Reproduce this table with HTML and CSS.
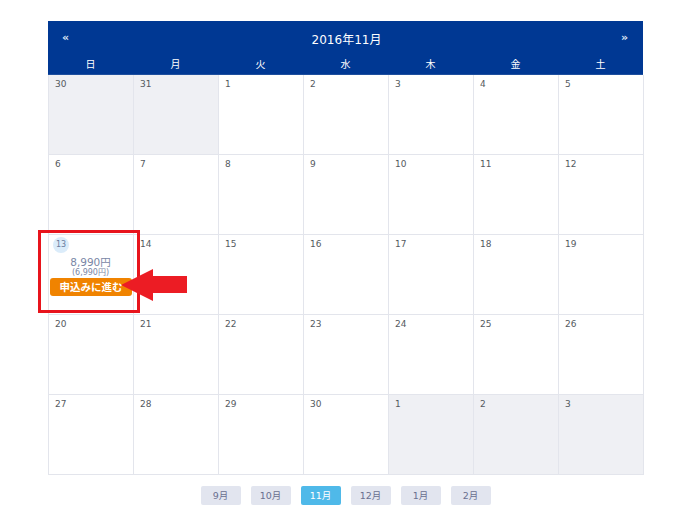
FILE: index.html
```html
<!DOCTYPE html>
<html lang="ja">
<head>
<meta charset="utf-8">
<link rel="stylesheet" href="styles.css">
</head>
<body>
<div class="page">
  <div class="cal">
    <div class="cal-head">
      <span class="nav">&laquo;</span>
      <span class="title">2016年11月</span>
      <span class="nav">&raquo;</span>
    </div>
    <div class="weekdays">
      <div>日</div><div>月</div><div>火</div><div>水</div><div>木</div><div>金</div><div>土</div>
    </div>
    <div class="grid">
      <div class="cell off"><span class="d">30</span></div>
      <div class="cell off"><span class="d">31</span></div>
      <div class="cell"><span class="d">1</span></div>
      <div class="cell"><span class="d">2</span></div>
      <div class="cell"><span class="d">3</span></div>
      <div class="cell"><span class="d">4</span></div>
      <div class="cell"><span class="d">5</span></div>

      <div class="cell"><span class="d">6</span></div>
      <div class="cell"><span class="d">7</span></div>
      <div class="cell"><span class="d">8</span></div>
      <div class="cell"><span class="d">9</span></div>
      <div class="cell"><span class="d">10</span></div>
      <div class="cell"><span class="d">11</span></div>
      <div class="cell"><span class="d">12</span></div>

      <div class="cell avail">
        <span class="d badge">13</span>
        <div class="price">8,990円</div>
        <div class="sub">(6,990円)</div>
        <button class="apply">申込みに進む</button>
        <div class="hl"></div>
        <svg class="arrow" width="66" height="34" viewBox="0 0 66 34"><polygon points="0,16 32,0 32,7 66,7 66,24 32,24 32,32" fill="#ec1c24"/></svg>
      </div>
      <div class="cell"><span class="d">14</span></div>
      <div class="cell"><span class="d">15</span></div>
      <div class="cell"><span class="d">16</span></div>
      <div class="cell"><span class="d">17</span></div>
      <div class="cell"><span class="d">18</span></div>
      <div class="cell"><span class="d">19</span></div>

      <div class="cell"><span class="d">20</span></div>
      <div class="cell"><span class="d">21</span></div>
      <div class="cell"><span class="d">22</span></div>
      <div class="cell"><span class="d">23</span></div>
      <div class="cell"><span class="d">24</span></div>
      <div class="cell"><span class="d">25</span></div>
      <div class="cell"><span class="d">26</span></div>

      <div class="cell"><span class="d">27</span></div>
      <div class="cell"><span class="d">28</span></div>
      <div class="cell"><span class="d">29</span></div>
      <div class="cell"><span class="d">30</span></div>
      <div class="cell off"><span class="d">1</span></div>
      <div class="cell off"><span class="d">2</span></div>
      <div class="cell off"><span class="d">3</span></div>
    </div>
  </div>
  <div class="months">
    <span class="m">9月</span>
    <span class="m">10月</span>
    <span class="m active">11月</span>
    <span class="m">12月</span>
    <span class="m">1月</span>
    <span class="m">2月</span>
  </div>
</div>
</body>
</html>
```
FILE: styles.css
```css
* { box-sizing: border-box; }
body {
  margin: 0;
  background: #fff;
  font-family: "DejaVu Sans", "Noto Sans CJK JP", sans-serif;
}
.page {
  padding: 21px 0 0 48px;
  width: 691px;
}
.cal {
  width: 595px;
}
.cal-head {
  background: #003893;
  height: 33px;
  display: flex;
  align-items: center;
  justify-content: space-between;
  padding: 0 12px 0 14px;
  color: #fff;
}
.cal-head .title {
  font-family: "DejaVu Sans", "Noto Sans CJK JP", sans-serif;
  font-size: 12px;
  padding-top: 1px;
}
.cal-head .nav {
  font-size: 11px;
  font-weight: bold;
  color: #dfe6f5;
  width: 10px;
}
.weekdays {
  background: #003893;
  height: 21px;
  display: grid;
  grid-template-columns: repeat(7, 85px);
  color: #fff;
  font-family: "Noto Sans CJK JP", sans-serif;
  font-size: 10px;
  border-bottom: 1px solid #1e4f9e;
}
.weekdays div {
  text-align: center;
  line-height: 19px;
}
.grid {
  display: grid;
  grid-template-columns: repeat(7, 85px);
  grid-auto-rows: 80px;
  border-left: 1px solid #e3e5ec;
}
.cell {
  border-right: 1px solid #e3e5ec;
  border-bottom: 1px solid #e3e5ec;
  padding: 3px 0 0 6px;
  position: relative;
  background: #fff;
  font-size: 9px;
  line-height: 12px;
}
.cell.off { background: #eff0f4; }
.cell.avail { z-index: 2; }
.d {
  display: block;
  font-size: 9px;
  color: #555a60;
  line-height: 12px;
}
.badge {
  background: #dbecfa;
  color: #6a7d9e;
  width: 16px;
  height: 16px;
  border-radius: 50%;
  text-align: center;
  line-height: 16px;
  font-size: 8px;
  margin-left: -2px;
  margin-top: -1px;
}
.price {
  text-align: center;
  font-size: 10.5px;
  color: #7a86a6;
  line-height: 12px;
  margin-top: 3px;
  padding-right: 7px;
}
.sub {
  text-align: center;
  font-size: 8px;
  color: #7a86a6;
  line-height: 9px;
  padding-right: 7px;
}
.apply {
  display: block;
  margin: 1px 0 0 -5px;
  width: 82px;
  height: 18px;
  border: none;
  border-radius: 3px;
  background: #f08300;
  color: #fff;
  font-family: "Noto Sans CJK JP", sans-serif;
  font-weight: bold;
  font-size: 10.5px;
  line-height: 18px;
  padding: 0;
}
.hl {
  position: absolute;
  left: -11px;
  top: -5px;
  width: 102px;
  height: 83px;
  border: 3px solid #e8141c;
}
.arrow {
  position: absolute;
  left: 72px;
  top: 34px;
}
.months {
  display: flex;
  justify-content: center;
  gap: 10px;
  margin-top: 11px;
  padding-right: 48px;
}
.m {
  width: 40px;
  height: 19px;
  background: #e2e5ef;
  border-radius: 2px;
  color: #6a7090;
  font-size: 9.5px;
  text-align: center;
  line-height: 19px;
}
.m.active {
  background: #4fb9e9;
  color: #fff;
}
```
